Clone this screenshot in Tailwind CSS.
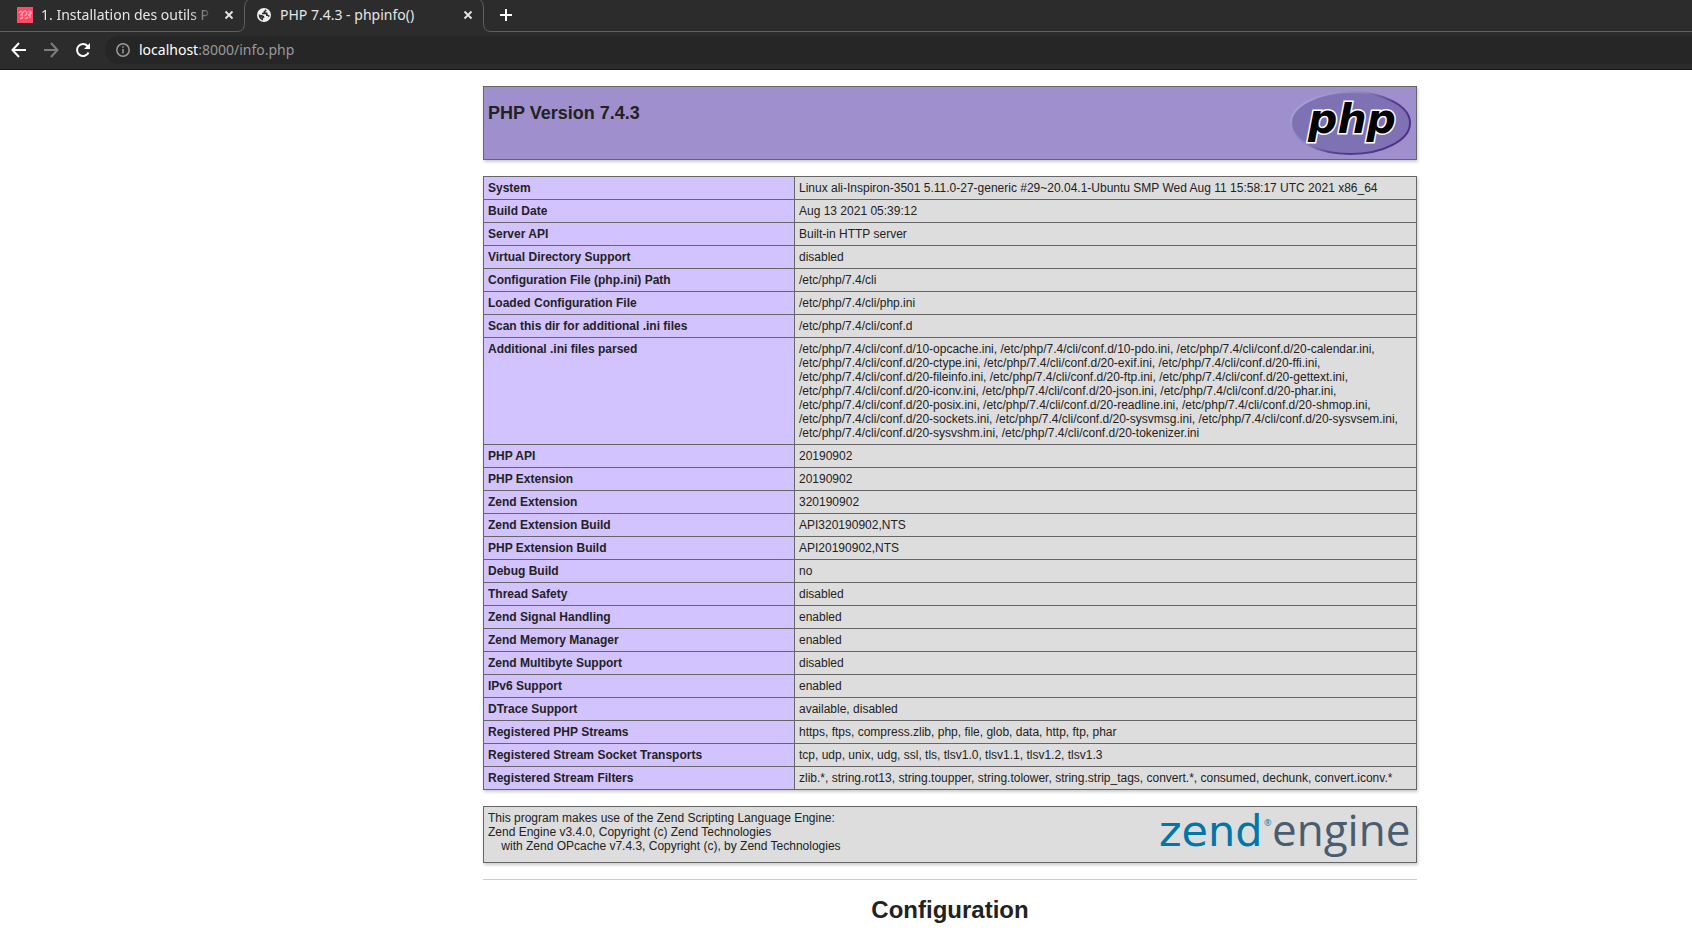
<!DOCTYPE html>
<html lang="fr">
<head>
<meta charset="utf-8">
<title>PHP 7.4.3 - phpinfo()</title>
<script src="https://cdn.jsdelivr.net/npm/@tailwindcss/browser@4"></script>
</head>
<body class="bg-white font-['Liberation_Sans',Arial,sans-serif] text-[12px] leading-[14px] text-[#222] overflow-hidden">
<header class="bg-[#2c2c2c] border-b border-[#161616] font-['Noto_Sans',sans-serif] text-[14px] leading-[20px] text-[#e6e6e6]">
  <nav class="flex h-8" aria-label="Onglets">
    <div class="flex w-[237px] items-center border-b border-[#606060] pb-px pl-[17px]">
      <svg class="size-4 shrink-0" viewBox="0 0 16 16" fill="none"><rect width="16" height="16" fill="#ff4a66"/><g stroke="#ffb3bf" stroke-width="1.1"><path d="M2 6q1.500-3 3-1t-1.500 3q2-.5 2 1.500M6 5.500q2-2.500 3.500-.5T7.500 9M10.500 5q2-1.500 3.500 0T11 8M13 5v6M3 11q2 1 3-1M8 11q2 1 3-1"/></g></svg>
      <a href="#" class="ml-2 min-w-0 flex-1 overflow-hidden whitespace-nowrap mask-r-from-85% mask-r-to-100%">1. Installation des outils P</a>
      <button class="ml-[6px] flex size-4 shrink-0 items-center justify-center" aria-label="Fermer l'onglet"><svg class="size-[10px]" viewBox="0 0 10 10" stroke="currentColor" stroke-width="1.8"><path d="M1.500 1.500l7 7M8.500 1.500l-7 7"/></svg></button>
    </div>
    <svg class="h-8 w-4 shrink-0" viewBox="0 0 16 32" fill="none" stroke="#606060"><path d="M0 31.500Q7.500 31.500 7.500 23.500V7Q7.500 2 11-.5"/></svg>
    <div class="flex w-[226px] items-center pb-[2px] pl-1 pr-[3px]">
      <svg class="size-[14px] shrink-0" viewBox="0 0 14 14"><circle cx="7" cy="7" r="7" fill="#f2f2f2"/><path d="M8 1.600Q8 3 6.500 3.300V4.800H5v1.500H8.500Q9.200 6.500 9.200 8H10.500Q11.500 8 11.600 9.500Q12.600 8.500 12.500 7Q11 7.500 10.500 6V4.600H8.500V3.400Q9.500 3 9.800 2.200Q9 1.700 8 1.600M1.600 6.500L4.600 9.300V10.200H6V12.400Q2 11.800 1.600 6.500M1.600 6.300Q3.500 7 5.500 7.200T7.500 9.500L6 10.500" fill="#2c2c2c"/></svg>
      <a href="#" class="ml-[9px] flex-1 whitespace-nowrap">PHP 7.4.3 - phpinfo()</a>
      <button class="flex size-4 items-center justify-center" aria-label="Fermer l'onglet"><svg class="size-[10px]" viewBox="0 0 10 10" stroke="currentColor" stroke-width="1.8"><path d="M1.500 1.500l7 7M8.500 1.500l-7 7"/></svg></button>
    </div>
    <svg class="h-8 w-3 shrink-0" viewBox="0 0 12 32" fill="none" stroke="#606060"><path d="M12 31.500Q4.500 31.500 4.500 23.500V7Q4.500 2 1-.5"/></svg>
    <div class="flex flex-1 items-center border-b border-[#606060] pb-px pl-[9px]">
      <button aria-label="Nouvel onglet"><svg class="size-[12px]" viewBox="0 0 12 12" stroke="#fff" stroke-width="2"><path d="M6 0v12M0 6h12"/></svg></button>
    </div>
  </nav>
  <div class="flex items-center pt-1 pb-[5px] pl-[11px]">
    <button aria-label="Précédent"><svg class="size-4" viewBox="0 0 16 16" fill="none" stroke="#fff" stroke-width="2"><path d="M15 8H2M8 1L1.500 8 8 15"/></svg></button>
    <button class="ml-4" aria-label="Suivant"><svg class="size-4" viewBox="0 0 16 16" fill="none" stroke="#7d7d7d" stroke-width="2"><path d="M1 8h13M8 1l6.500 7L8 15"/></svg></button>
    <button class="ml-4" aria-label="Actualiser"><svg class="size-4" viewBox="0 0 16 16" fill="none" stroke="#fff" stroke-width="2"><path d="M13.500 10.500A6 6 0 1 1 12.500 4L14 5.500"/><path d="M15 1v6H9z" fill="#fff" stroke="none"/></svg></button>
    <div class="ml-[14px] flex h-7 flex-1 items-center rounded-l-full bg-[#262626] pl-[11px]">
      <svg class="size-[14px]" viewBox="0 0 14 14" fill="none" stroke="#9a9a9a" stroke-width="1.500"><circle cx="7" cy="7" r="6.200"/><path d="M7 6v4.500M7 3.300v1.500"/></svg>
      <a href="#" class="ml-[9px] text-[#999]"><span class="text-white">localhost</span>:8000/info.php</a>
    </div>
  </div>
</header>
<main class="pt-4 pl-[208px]">
  <div class="mx-auto w-[934px]">
    <div class="flex items-start justify-between border border-[#666] bg-[#9f90cd] px-1 shadow-[1px_2px_3px_#ccc]">
      <h1 class="mt-[16px] text-[18px] leading-[21px] font-bold">PHP Version 7.4.3</h1>
      <svg class="my-[4px] h-[64px] w-[122px] overflow-visible" viewBox="0 0 122 64" role="img" aria-label="Logo PHP">
        <defs><linearGradient id="rim" x1="0" y1="0" x2="1" y2="0.600"><stop offset="0" stop-color="#aeb0de"/><stop offset=".45" stop-color="#8d83bd"/><stop offset=".7" stop-color="#573a94"/><stop offset="1" stop-color="#4d3089"/></linearGradient></defs>
        <ellipse cx="60.500" cy="32" rx="59.500" ry="31" fill="#7f72b4" stroke="url(#rim)" stroke-width="2"/>
        <text x="62" y="42" text-anchor="middle" font-family="DejaVu Sans" font-weight="bold" font-style="italic" font-size="41" stroke="#fff" stroke-width="3" paint-order="stroke">php</text>
      </svg>
    </div>
    <table class="mt-4 w-full table-fixed border-collapse text-left shadow-[1px_2px_3px_#ccc] [&_td]:border [&_td]:border-[#666] [&_td]:bg-[#ddd] [&_td]:px-1 [&_td]:py-1 [&_th]:border [&_th]:border-[#666] [&_th]:bg-[#d2c3ff] [&_th]:px-1 [&_th]:py-1 [&_th]:align-top [&_th]:font-bold">
      <colgroup><col class="w-[311px]"><col></colgroup>
      <tbody>
      <tr><th scope="row">System</th><td>Linux ali-Inspiron-3501 5.11.0-27-generic #29~20.04.1-Ubuntu SMP Wed Aug 11 15:58:17 UTC 2021 x86_64</td></tr>
      <tr><th scope="row">Build Date</th><td>Aug 13 2021 05:39:12</td></tr>
      <tr><th scope="row">Server API</th><td>Built-in HTTP server</td></tr>
      <tr><th scope="row">Virtual Directory Support</th><td>disabled</td></tr>
      <tr><th scope="row">Configuration File (php.ini) Path</th><td>/etc/php/7.4/cli</td></tr>
      <tr><th scope="row">Loaded Configuration File</th><td>/etc/php/7.4/cli/php.ini</td></tr>
      <tr><th scope="row">Scan this dir for additional .ini files</th><td>/etc/php/7.4/cli/conf.d</td></tr>
      <tr><th scope="row">Additional .ini files parsed</th><td>/etc/php/7.4/cli/conf.d/10-opcache.ini, /etc/php/7.4/cli/conf.d/10-pdo.ini, /etc/php/7.4/cli/conf.d/20-calendar.ini,<br>/etc/php/7.4/cli/conf.d/20-ctype.ini, /etc/php/7.4/cli/conf.d/20-exif.ini, /etc/php/7.4/cli/conf.d/20-ffi.ini,<br>/etc/php/7.4/cli/conf.d/20-fileinfo.ini, /etc/php/7.4/cli/conf.d/20-ftp.ini, /etc/php/7.4/cli/conf.d/20-gettext.ini,<br>/etc/php/7.4/cli/conf.d/20-iconv.ini, /etc/php/7.4/cli/conf.d/20-json.ini, /etc/php/7.4/cli/conf.d/20-phar.ini,<br>/etc/php/7.4/cli/conf.d/20-posix.ini, /etc/php/7.4/cli/conf.d/20-readline.ini, /etc/php/7.4/cli/conf.d/20-shmop.ini,<br>/etc/php/7.4/cli/conf.d/20-sockets.ini, /etc/php/7.4/cli/conf.d/20-sysvmsg.ini, /etc/php/7.4/cli/conf.d/20-sysvsem.ini,<br>/etc/php/7.4/cli/conf.d/20-sysvshm.ini, /etc/php/7.4/cli/conf.d/20-tokenizer.ini</td></tr>
      <tr><th scope="row">PHP API</th><td>20190902</td></tr>
      <tr><th scope="row">PHP Extension</th><td>20190902</td></tr>
      <tr><th scope="row">Zend Extension</th><td>320190902</td></tr>
      <tr><th scope="row">Zend Extension Build</th><td>API320190902,NTS</td></tr>
      <tr><th scope="row">PHP Extension Build</th><td>API20190902,NTS</td></tr>
      <tr><th scope="row">Debug Build</th><td>no</td></tr>
      <tr><th scope="row">Thread Safety</th><td>disabled</td></tr>
      <tr><th scope="row">Zend Signal Handling</th><td>enabled</td></tr>
      <tr><th scope="row">Zend Memory Manager</th><td>enabled</td></tr>
      <tr><th scope="row">Zend Multibyte Support</th><td>disabled</td></tr>
      <tr><th scope="row">IPv6 Support</th><td>enabled</td></tr>
      <tr><th scope="row">DTrace Support</th><td>available, disabled</td></tr>
      <tr><th scope="row">Registered PHP Streams</th><td>https, ftps, compress.zlib, php, file, glob, data, http, ftp, phar</td></tr>
      <tr><th scope="row">Registered Stream Socket Transports</th><td>tcp, udp, unix, udg, ssl, tls, tlsv1.0, tlsv1.1, tlsv1.2, tlsv1.3</td></tr>
      <tr><th scope="row">Registered Stream Filters</th><td>zlib.*, string.rot13, string.toupper, string.tolower, string.strip_tags, convert.*, consumed, dechunk, convert.iconv.*</td></tr>
      </tbody>
    </table>
    <div class="mt-4 flex justify-between border border-[#666] bg-[#ddd] px-1 shadow-[1px_2px_3px_#ccc]">
      <p class="py-1">This program makes use of the Zend Scripting Language Engine:<br>Zend Engine v3.4.0, Copyright (c) Zend Technologies<br>&nbsp;&nbsp;&nbsp;&nbsp;with Zend OPcache v7.4.3, Copyright (c), by Zend Technologies</p>
      <svg class="h-[55px] w-[252px] overflow-visible" viewBox="0 0 252 55" role="img" aria-label="Logo Zend Engine">
        <text x="-1" y="39" font-family="DejaVu Sans" font-size="43" fill="#0077a8">zend</text>
        <text x="104" y="19" font-family="Open Sans" font-size="9" fill="#0077a8">®</text>
        <text x="112" y="39" font-family="Open Sans" font-size="44" fill="#495c70">engine</text>
      </svg>
    </div>
    <hr class="mt-4 border-[#ccc]">
    <h2 class="mt-4 text-center text-[24px] leading-[28px] font-bold">Configuration</h2>
  </div>
</main>
</body>
</html>
